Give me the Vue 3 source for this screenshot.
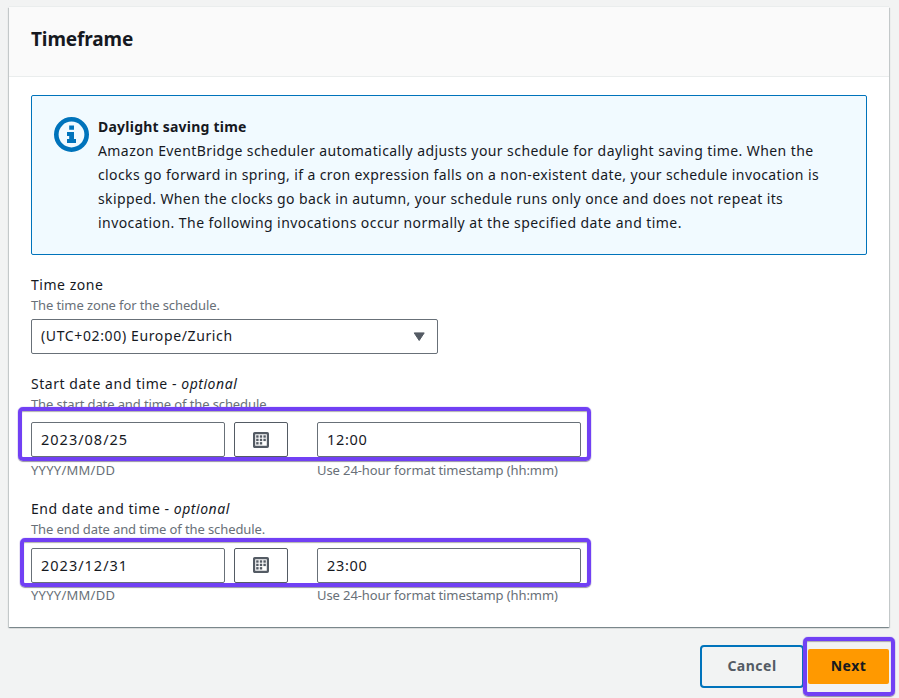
<script setup>
import { ref } from 'vue'

const notice = [
  { text: 'Amazon EventBridge scheduler automatically adjusts your schedule for daylight saving time. When the', cls: 'l1' },
  { text: 'clocks go forward in spring, if a cron expression falls on a non-existent date, your schedule invocation is', cls: 'l2' },
  { text: 'skipped. When the clocks go back in autumn, your schedule runs only once and does not repeat its', cls: 'l3' },
  { text: 'invocation. The following invocations occur normally at the specified date and time.', cls: 'l4' }
]
const groups = ref([
  { id: 'start', label: 'Start date and time - ', hint: 'The start date and time of the schedule.', date: '2023/08/25', time: '12:00' },
  { id: 'end', label: 'End date and time - ', hint: 'The end date and time of the schedule.', date: '2023/12/31', time: '23:00' }
])
const dots = [[3.2, 3.3], [6.8, 3.3], [10.4, 3.3], [3.2, 6.7], [6.8, 6.7], [10.4, 6.7], [3.2, 10.1], [6.8, 10.1]]
</script>

<template>
  <main class="page">
    <section class="panel">
      <header class="panel-head"><h2><span>Timeframe</span></h2></header>
      <div class="panel-body">
        <div class="notice">
          <svg class="info" width="36" height="36" viewBox="0 0 36 36">
            <circle cx="18.5" cy="18.5" r="15.2" fill="none" stroke="#0073bb" stroke-width="4.6" />
            <path d="M16.2 9.5h4.8v4.3h-4.8zM14 15.9h7v7h2v4h-9v-4h2.2v-3h-2.2z" fill="#0073bb" />
          </svg>
          <div class="notice-text">
            <strong><span>Daylight saving time</span></strong>
            <p v-for="n in notice" :key="n.cls"><span :class="n.cls">{{ n.text }}</span></p>
          </div>
        </div>

        <div class="field zone">
          <div class="label"><span>Time zone</span></div>
          <div class="hint"><span>The time zone for the schedule.</span></div>
          <div class="select">
            <span>(UTC+02:00) Europe/Zurich</span>
            <svg width="12" height="10" viewBox="0 0 12 10"><path d="M1.2 .9h10L6.2 8.5z" fill="#545b64" stroke="#545b64" stroke-linejoin="round" /></svg>
          </div>
        </div>

        <div v-for="g in groups" :key="g.id" class="field" :class="g.id">
          <div class="label"><span>{{ g.label }}<em>optional</em></span></div>
          <div class="hint"><span>{{ g.hint }}</span></div>
          <div class="row">
            <div class="input date"><span>{{ g.date }}</span></div>
            <button class="cal" aria-label="Calendar">
              <svg width="16" height="16" viewBox="0 0 16 16">
                <rect x="1.1" y="1.1" width="13.8" height="13.8" rx=".6" fill="none" stroke="#545b64" stroke-width="2.2" />
                <rect v-for="(d, i) in dots" :key="i" :x="d[0]" :y="d[1]" width="2.4" height="2.4" fill="#545b64" />
              </svg>
            </button>
            <div class="input time"><span>{{ g.time }}</span></div>
          </div>
          <div class="row below">
            <div class="date"><span class="c1">YYYY/MM/DD</span></div>
            <div class="time"><span class="c2">Use 24-hour format timestamp (hh:mm)</span></div>
          </div>
        </div>
      </div>
    </section>
    <footer class="actions">
      <button class="cancel"><span>Cancel</span></button>
      <button class="next"><span>Next</span></button>
    </footer>
    <div class="mark m1"></div>
    <div class="mark m2"></div>
    <div class="mark m3"></div>
  </main>
</template>

<style>
body { margin: 0; background: #f2f3f3; }
</style>

<style scoped>
* { box-sizing: border-box; }
.page {
  position: relative; height: 698px; padding: 7px 10px 0 9px; overflow: hidden;
  background: #f2f3f3; color: #16191f;
  font-family: "Noto Sans", "Open Sans", sans-serif; font-size: 14px;
}
.page span { white-space: pre; }
.panel { height: 620px; background: #fff; box-shadow: 0 1px 1px 0 rgba(0, 28, 36, .3), 1px 1px 1px 0 rgba(0, 28, 36, .15), -1px 1px 1px 0 rgba(0, 28, 36, .15), 0 -1px 0 #eaeded; }
.panel-head { height: 70px; padding: 0 22px; border-bottom: 1px solid #eaeded; background: #fafafa; }
h2 { margin: 0; font-size: 19px; line-height: 64px; font-weight: 700; letter-spacing: -.12px; }
.panel-body { padding: 18px 22px 0; }
.notice { display: flex; gap: 9px; height: 160px; padding: 19px 22px 0 21px; border: 1px solid #0073bb; border-radius: 2px; background: #f1faff; }
.info { flex: none; margin-top: 1px; }
.notice-text strong, .notice-text p { display: block; margin: 0; height: 24px; line-height: 24px; }
strong { font-weight: 700; letter-spacing: .23px; }
.l1 { letter-spacing: .415px; }
.l2 { letter-spacing: .385px; }
.l3 { letter-spacing: .39px; }
.l4 { letter-spacing: .435px; }
.field { display: flex; flex-direction: column; }
.zone { padding-top: 19px; height: 118px; }
.start { height: 125px; }
.label { height: 21px; line-height: 22px; letter-spacing: .54px; }
.hint { height: 21px; line-height: 20px; font-size: 13px; letter-spacing: -.11px; color: #687078; }
.select { display: flex; align-items: center; justify-content: space-between; width: 407px; height: 35px; margin-top: 3px; padding: 0 12px 0 9px; border: 1px solid #687078; border-radius: 2px; background: #fff; letter-spacing: .63px; }
.select span { padding-bottom: 2px; }
.row { display: flex; margin-top: 7px; }
.end .row { margin-top: 8px; }
.input { display: flex; align-items: center; height: 35px; padding: 0 9px 2px; border: 1px solid #687078; border-radius: 2px; background: #fff; font-size: 14.5px; letter-spacing: 1px; }
.input.time { letter-spacing: .7px; }
.cal { display: flex; align-items: center; justify-content: center; width: 54px; height: 35px; margin: 0 29px 0 9px; padding: 0; border: 1px solid #545b64; border-radius: 2px; background: #fff; }
.end .cal { padding-bottom: 1px; }
.date { width: 194px; }
.time { width: 264px; }
.row.below { margin-top: 3px; line-height: 20px; font-size: 13px; color: #687078; }
.end .row.below { margin-top: 2px; }
.below .time { margin-left: 92px; }
.c1 { letter-spacing: .25px; }
.c2 { letter-spacing: -.1px; }
.actions { display: flex; justify-content: flex-end; align-items: flex-start; gap: 4px; padding-top: 18px; }
.actions button { display: flex; align-items: center; justify-content: center; padding: 0 0 2px; font: 700 14px "Noto Sans", sans-serif; letter-spacing: .5px; }
.actions .cancel { width: 104px; height: 43px; border: 2px solid #0073bb; border-radius: 4px; background: transparent; color: #545b64; }
.actions .next { width: 81px; height: 35px; margin-top: 4px; border: 0; border-radius: 2px; background: #ff9900; color: #16191f; }
.mark { position: absolute; border: 4px solid #7140f4; border-radius: 5px; box-shadow: 0 0 1px #7140f4, 0 1px 1px rgba(60, 60, 60, .5), inset 0 1px 1px rgba(60, 60, 60, .4); }
.m1 { left: 18px; top: 407px; width: 573px; height: 54px; }
.m2 { left: 20px; top: 538px; width: 571px; height: 49px; }
.m3 { left: 803px; top: 637px; width: 92px; height: 59px; }
</style>
